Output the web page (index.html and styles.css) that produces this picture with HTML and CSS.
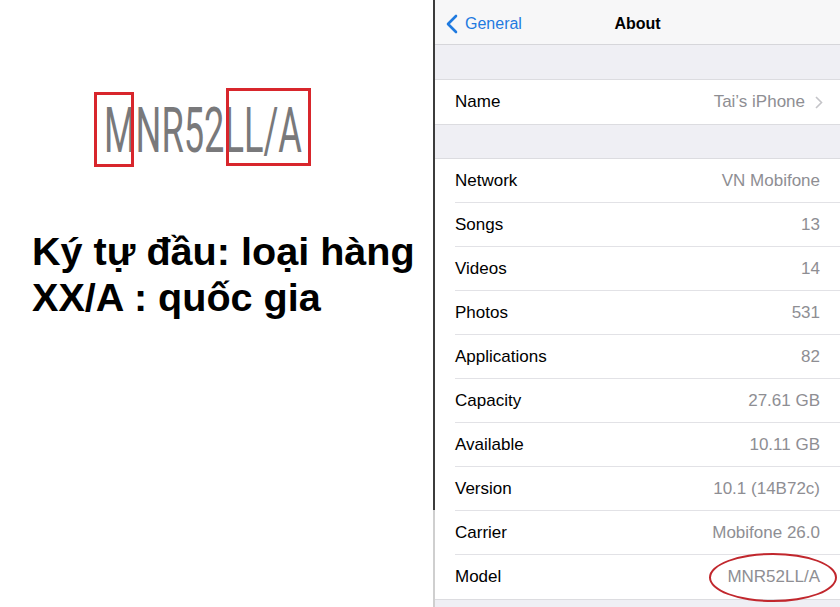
FILE: index.html
```html
<!DOCTYPE html>
<html lang="vi">
<head>
  <meta charset="UTF-8" />
  <meta name="viewport" content="width=device-width, initial-scale=1.0"/>
  <title>Model iPhone</title>
  <link rel="stylesheet" href="styles.css">
</head>
<body>

  <div class="left">
    <svg class="model-pic" width="240" height="86" viewBox="0 0 240 86">
      <text transform="scale(0.6 1)" x="23.3" y="66" textLength="330" lengthAdjust="spacingAndGlyphs" class="model-text">MNR52LL/A</text>
      <rect x="5.5" y="7.5" width="37" height="72" class="mark" />
      <rect x="137.5" y="3.5" width="82" height="75" class="mark" />
    </svg>

    <h1 class="note">Ký tự đầu: loại hàng<br>XX/A : quốc gia</h1>
  </div>

  <div class="divider"></div>

  <div class="screen">
    <div class="nav">
      <a class="back">
        <svg width="14" height="20" viewBox="0 0 14 20"><path d="M11 2 L3 10 L11 18" /></svg>
        General
      </a>
      <div class="title">About</div>
      <div></div>
    </div>

    <div class="group">
      <div class="row">
        <span>Name</span>
        <span class="value">Tai’s iPhone
          <svg class="chev" width="8" height="13" viewBox="0 0 8 13"><path d="M1 1 L6.5 6.5 L1 12" /></svg>
        </span>
      </div>
    </div>

    <div class="group">
      <div class="row"><span>Network</span><span class="value">VN Mobifone</span></div>
      <div class="row"><span>Songs</span><span class="value">13</span></div>
      <div class="row"><span>Videos</span><span class="value">14</span></div>
      <div class="row"><span>Photos</span><span class="value">531</span></div>
      <div class="row"><span>Applications</span><span class="value">82</span></div>
      <div class="row"><span>Capacity</span><span class="value">27.61 GB</span></div>
      <div class="row"><span>Available</span><span class="value">10.11 GB</span></div>
      <div class="row"><span>Version</span><span class="value">10.1 (14B72c)</span></div>
      <div class="row"><span>Carrier</span><span class="value">Mobifone 26.0</span></div>
      <div class="row model"><span>Model</span><span class="value">MNR52LL/A</span><span class="circle"></span></div>
    </div>
  </div>

</body>
</html>
```

FILE: styles.css
```css
html, body { margin: 0; height: 100%; }
body { display: flex; width: 840px; height: 607px; overflow: hidden; background: #fff; font-family: "Liberation Sans", Arial, sans-serif; }

.left { width: 433px; padding: 86px 0 0 0; box-sizing: border-box; }
.model-pic { display: block; margin-left: 90px; }
.model-text { font-family: Roboto, "Liberation Sans", sans-serif; font-weight: 400; font-size: 63px; fill: #79797b; }
.mark { fill: none; stroke: #d8262c; stroke-width: 3; }
.note { margin: 56px 0 0 32px; font-size: 39.6px; line-height: 46px; font-weight: bold; color: #000; }

.divider { width: 2px; background: linear-gradient(#3c3c3c 0 510px, #cfcfcf 510px); }

.screen { flex: 1; background: #efeff4; }
.nav { height: 45px; padding-top: 3px; box-sizing: border-box; background: #f7f7f8; border-bottom: 1px solid #d6d6da; display: grid; grid-template-columns: 1fr auto 1fr; align-items: center; margin-bottom: 34px; }
.back { display: flex; align-items: center; gap: 6px; padding-left: 10px; color: #1f7ae0; font-size: 16px; }
.back svg path { fill: none; stroke: #1f7ae0; stroke-width: 2.6; stroke-linecap: round; stroke-linejoin: round; }
.title { font-size: 16px; font-weight: bold; color: #000; }

.group { background: #fff; border-top: 1px solid #dcdce0; border-bottom: 1px solid #dcdce0; margin-bottom: 33px; }
.row { height: 43px; margin-left: 20px; padding-right: 20px; display: flex; justify-content: space-between; align-items: center; border-bottom: 1px solid #e2e2e6; font-size: 17px; color: #000; position: relative; }
.row:last-child { height: 44px; border-bottom: none; }
.value { color: #8e8e93; display: flex; align-items: center; }
.chev { margin-left: 10px; margin-right: -3px; }
.chev path { fill: none; stroke: #c4c4c8; stroke-width: 1.6; }
.circle { position: absolute; right: 3px; top: -2px; width: 124px; height: 45px; border: 2px solid #c1272d; border-radius: 50%; }
```
